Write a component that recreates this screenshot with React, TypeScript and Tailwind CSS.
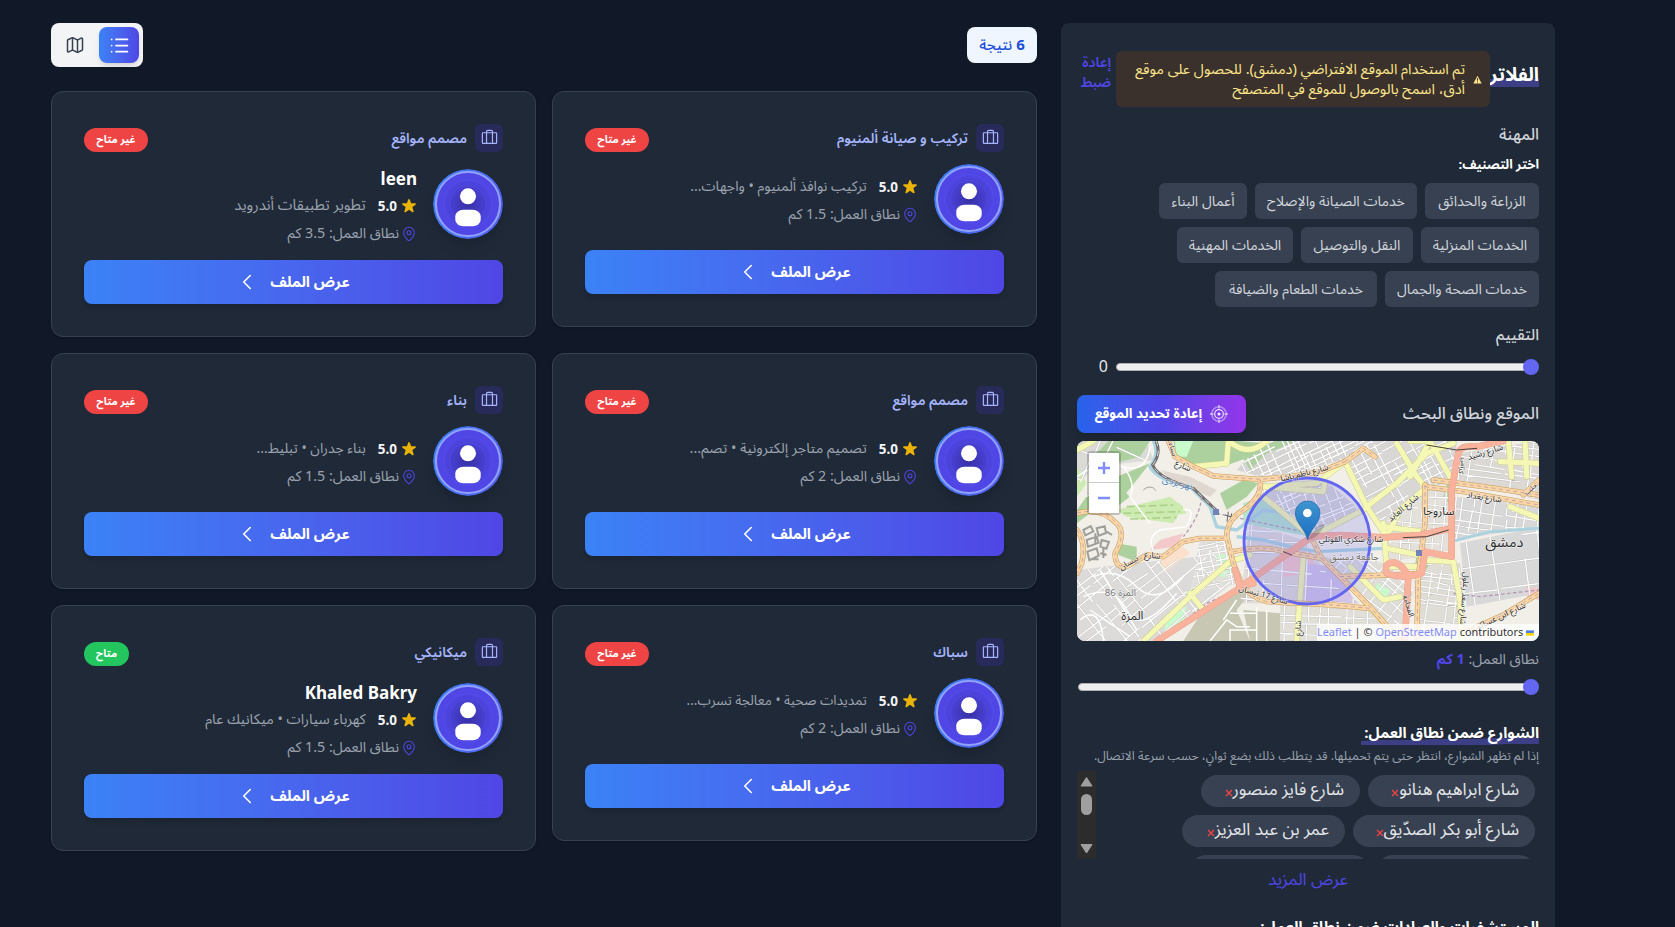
import React from "react";
import { PiSuitcase } from "react-icons/pi";
import { Map, MapPin, List, ChevronLeft } from "lucide-react";

type Pt = [number, number];

function seeded(seed: number) {
  let s = seed;
  return () => {
    s = (s * 16807) % 2147483647;
    return s / 2147483647;
  };
}

function streetPath(cx: number, cy: number, r: number, angle: number, gap: number, seed: number) {
  const rnd = seeded(seed);
  const a = (angle * Math.PI) / 180;
  const out: string[] = [];
  const pt = (u: number, v: number) =>
    `${(cx + u * Math.cos(a) - v * Math.sin(a)).toFixed(0)} ${(cy + u * Math.sin(a) + v * Math.cos(a)).toFixed(0)}`;
  for (let dir = 0; dir < 2; dir++) {
    for (let v = -r; v < r; v += gap * (0.6 + rnd() * 0.9) * (dir ? 1.3 : 1)) {
      let u = -r;
      while (u < r) {
        const len = gap * (2 + rnd() * 7);
        const w = (rnd() - 0.5) * gap * 0.5;
        if (rnd() > 0.2) {
          out.push(dir ? `M${pt(v, u)}L${pt(v + w, u + len)}` : `M${pt(u, v)}L${pt(u + len, v + w)}`);
        }
        u += len + gap * rnd() * 0.6;
      }
    }
  }
  return out.join("");
}

const districts: { poly: string; c: Pt; r: number; angle: number; gap: number; fill: string }[] = [
  { poly: "640,393 930,393 880,450 720,490 630,500 560,480", c: [750, 450], r: 190, angle: -25, gap: 17, fill: "#d6d5d4" },
  { poly: "900,393 1220,393 1210,520 1120,530 1000,640 930,560 890,470", c: [1060, 500], r: 240, angle: -28, gap: 18, fill: "#d8d7d6" },
  { poly: "1225,430 1467,393 1467,570 1215,510", c: [1340, 480], r: 180, angle: 8, gap: 20, fill: "#dcd9d5" },
  { poly: "1000,640 1120,530 1205,530 1200,720 1010,760", c: [1100, 640], r: 170, angle: 4, gap: 19, fill: "#e4e0da" },
  { poly: "1215,560 1467,590 1467,650 1215,690", c: [1340, 610], r: 150, angle: 8, gap: 24, fill: "#d9d8d8" },
  { poly: "1230,700 1467,650 1467,850 1250,890", c: [1340, 780], r: 150, angle: -8, gap: 52, fill: "#d9d8d8" },
  { poly: "81,780 250,760 440,740 540,690 570,800 330,993 81,993", c: [290, 870], r: 300, angle: -38, gap: 30, fill: "#dcdbda" },
  { poly: "450,690 540,690 570,820 420,850", c: [500, 770], r: 120, angle: -12, gap: 16, fill: "#e2e0dc" },
  { poly: "640,530 830,515 930,600 800,660 640,560", c: [770, 580], r: 190, angle: -22, gap: 21, fill: "#d6d5d5" },
  { poly: "600,640 760,690 860,830 930,880 570,880", c: [740, 770], r: 190, angle: 3, gap: 42, fill: "#e0dad8" },
  { poly: "810,740 1010,760 1090,840 1060,993 960,900", c: [980, 850], r: 170, angle: 38, gap: 26, fill: "#dfddd8" },
  { poly: "1090,760 1230,760 1250,960 1100,993", c: [1160, 860], r: 140, angle: 8, gap: 17, fill: "#e0ddd6" },
  { poly: "690,885 960,885 1050,993 690,993", c: [850, 940], r: 170, angle: 2, gap: 24, fill: "#e2dfd9" },
  { poly: "81,393 290,393 310,450 130,470 81,530", c: [190, 440], r: 120, angle: 25, gap: 38, fill: "#dadbd6" },
];

const parks = [
  "175,393 300,393 270,440 190,460 130,440",
  "370,393 570,393 640,400 600,440 520,470 430,470 380,440",
  "560,410 680,393 740,393 650,430 600,480",
  "130,530 200,520 240,560 200,590 120,610 81,640 81,600",
  "510,550 580,510 625,520 590,560 530,600",
  "90,610 220,560 300,460 200,500 180,560",
  "200,700 260,710 260,755 205,735",
  "1195,510 1215,530 1205,590 1180,560",
  "1100,730 1140,760 1120,790 1095,770",
];

const orangeRoads = [
  "M355 393 L375 440 L430 470 L490 498 L630 508 L720 500 L810 485 L885 455",
  "M630 508 Q640 560 580 600 Q530 630 530 680 L550 760 L570 810",
  "M81 610 Q150 590 200 640 Q230 670 195 730 Q195 775 230 770 L290 735 L340 740 L400 695 L450 685 L530 685",
  "M81 660 Q110 700 95 760 L81 790",
  "M550 725 Q640 705 700 725 L815 745",
  "M815 745 L870 800 L960 890 L1050 993",
  "M785 685 L815 745",
  "M570 820 Q600 860 650 875 L850 885 L960 895",
  "M870 800 L1020 795 L1110 790",
  "M1125 525 L1125 640 L1105 800 L1100 993",
  "M885 455 L940 415 L975 440",
  "M1125 530 L1240 545 L1467 585",
  "M1150 510 L1300 530 L1467 555",
  "M1420 555 L1467 510",
  "M1260 960 L1360 915 L1467 850",
];
const yellowRoads = [
  "M81 420 L130 393",
  "M280 993 L430 850 L540 755 L600 735",
  "M420 850 L460 900",
  "M430 470 L530 460 L535 393",
  "M545 400 Q600 440 650 393",
  "M885 455 L800 520 L640 530",
  "M885 455 L950 590 L1010 680",
  "M950 590 L1040 520 L1130 430 L1210 400",
  "M1040 400 L1100 500 L1125 530",
  "M1080 393 L1140 393 L1200 500",
  "M1140 393 L1080 500",
  "M1010 680 L1050 600 L1120 540",
  "M1000 640 L1010 770 L1110 770",
  "M1010 715 L1105 735",
  "M1110 750 L1210 755 L1230 870 L1235 993",
  "M760 740 L740 993",
  "M640 560 L785 680 L940 600",
  "M640 530 L820 545 L825 515",
  "M1375 393 L1385 500",
  "M1425 393 L1430 500",
  "M1350 455 L1467 460",
  "M900 770 L1000 870 L1050 860",
  "M940 870 L1050 993",
  "M1380 590 L1467 625",
  "M1000 650 L1110 665",
];
const redRoads = [
  "M320 993 L560 840 L700 740 L785 680",
  "M785 680 L870 675 L1000 682 L1110 675 L1205 655",
  "M1225 430 L1205 540 L1205 740 L1125 725 L1115 790 L1075 800 L1065 993",
  "M1075 800 Q1040 800 1010 790 Q1000 755 1035 758 Q1060 765 1075 800",
  "M1225 430 Q1230 405 1280 410 L1360 393",
  "M555 780 L570 830 L610 820",
];

const mapLabels: { t: string; x: number; y: number; r?: number; s?: number; c?: string }[] = [
  { t: "شارع ناظم باشا", x: 765, y: 497, r: -14, s: 25 },
  { t: "شارع شكري القوتلي", x: 903, y: 697, s: 25 },
  { t: "جامعة دمشق", x: 912, y: 750, s: 28, c: "#6b665e" },
  { t: "ساروجا", x: 1166, y: 616, s: 34 },
  { t: "دمشق", x: 1363, y: 710, s: 43 },
  { t: "المزة", x: 247, y: 931, s: 36 },
  { t: "المزة 86", x: 211, y: 857, s: 29, c: "#777777" },
  { t: "شارع بغداد", x: 1301, y: 570, r: 8, s: 25 },
  { t: "شارع رشيد", x: 1308, y: 434, r: -17, s: 26 },
  { t: "كرامي", x: 1232, y: 466, r: 105, s: 21 },
  { t: "شارع العابد", x: 1065, y: 600, r: -40, s: 26 },
  { t: "شارع 17 نيسان", x: 638, y: 862, r: 16, s: 25 },
  { t: "شارع", x: 306, y: 744, r: 5, s: 25 },
  { t: "نيسان", x: 240, y: 765, r: -30, s: 25 },
  { t: "شارع", x: 396, y: 475, r: 24, s: 25 },
  { t: "سناء", x: 362, y: 420, r: 75, s: 22 },
  { t: "نهر بردى", x: 380, y: 527, r: 14, s: 28, c: "#4d80b3" },
  { t: "شارع سعد زغلول", x: 1236, y: 865, r: 94, s: 24 },
  { t: "شارع ابن عساكر", x: 1356, y: 925, r: -25, s: 26 },
  { t: "الفحامة", x: 1068, y: 890, r: 72, s: 23 },
  { t: "شارع", x: 752, y: 955, r: -88, s: 24 },
  { t: "حلب", x: 1446, y: 542, r: -40, s: 22 },
];

function MapDrawing() {
  return (
    <svg viewBox="81 393 1386 600" className="block h-[200px] w-[462px]" preserveAspectRatio="none">
      <defs>
        {districts.map((d, i) => (
          <clipPath id={`district${i}`} key={i}>
            <polygon points={d.poly} />
          </clipPath>
        ))}
        <linearGradient id="pin" x1="0" x2="0" y1="0" y2="1">
          <stop offset="0" stopColor="#3f94d0" />
          <stop offset="1" stopColor="#1b6ec2" />
        </linearGradient>
      </defs>
      <rect x="81" y="393" width="1386" height="600" fill="#f2efe9" />
      {districts.map((d, i) => (
        <polygon key={i} points={d.poly} fill={d.fill} />
      ))}
      {parks.map((p) => (
        <polygon key={p} points={p} fill="#add19e" />
      ))}
      <path d="M81 470L110 520L81 560ZM250 590L390 580L410 610L260 630Z M200 600L360 560L400 590L370 640L230 620Z" fill="#cdebb0" />
      <path d="M230 590L370 585M220 610L390 605M240 627L380 622" stroke="#add18a" strokeWidth="5" strokeDasharray="24 9" />
      <path d="M580 580L640 560L780 680L580 640Z" fill="#b5e3cf" />
      <path d="M375 393H430L410 440L380 440ZM500 730L560 740V800L510 800ZM980 820L1020 840L1000 880L975 860ZM360 900L410 890L400 940L340 970Z" fill="#c8facc" />
      <path d="M690 700L780 720L800 790L700 800Z M330 690L400 670L380 710L300 720Z M1430 830L1467 835V870L1430 860Z" fill="#f3c9c9" />
      <path d="M330 740L400 710L420 730L340 790Z" fill="#fbe0cc" />
      <path d="M770 760L850 770L920 880L760 880Z" fill="#d3c3e6" />
      <path d="M460 900L560 840L600 850L560 900L600 993H400ZM580 900L690 910V993H600Z" fill="#c7c7b4" />
      <path d="M330 480L420 500L500 540L480 560L380 520Z" fill="#e0d8d0" />
      {districts.map((d, i) => {
        const path = streetPath(d.c[0], d.c[1], d.r, d.angle, d.gap, 31 + i * 97);
        return (
          <g key={i} clipPath={`url(#district${i})`} fill="none">
            <path d={path} stroke="#bdbbb8" strokeWidth="6" />
            <path d={path} stroke="#ffffff" strokeWidth="4.2" />
          </g>
        );
      })}
      <g fill="none" stroke="#ffffff" strokeWidth="4.5">
        <path d="M81 500Q150 450 220 470T300 410M220 470Q260 520 240 560L300 640M110 560Q170 520 180 470M400 600Q440 590 410 650L330 660Q290 680 310 720M540 910H620V960H540V993M480 993L530 930L560 950H600M560 870L520 930M620 890V993M650 900V993" />
        <path d="M130 800Q200 770 260 830T400 800M100 860Q190 820 230 900T380 850M150 780L260 960M120 900L240 980M90 930Q150 880 160 993" />
      </g>
      <g fill="none" stroke="#9e9e9b" strokeWidth="5">
        <path d="M100 660l22-12 8 16-24 12ZM140 655l24 -6 4 20-22 8ZM110 690l30-10 6 18-32 12ZM155 690l22 6-8 20-18-6ZM112 725l28-10 6 22-28 14ZM150 730l20 4M170 665l16 10M120 748l26 0M136 670v30M160 710v34" strokeWidth="6" />
        <path d="M280 540q15-14 30-6l8 8" strokeWidth="3" />
      </g>
      <g fill="none" stroke="#aad3df">
        <path d="M310 393Q330 430 300 470Q320 510 420 530L480 590L500 650L560 660L640 600L720 610M560 680L640 690L720 710L800 725L1000 715" strokeWidth="10" />
        <path d="M1215 692L1320 665L1467 655" strokeWidth="9" />
      </g>
      <g fill="none">
        <path d="M318 393Q335 430 308 465Q325 505 430 535L498 600" stroke="#707070" strokeWidth="9" />
        <path d="M318 393Q335 430 308 465Q325 505 430 535L498 600" stroke="#dddddd" strokeWidth="3" strokeDasharray="16 14" />
        <path d="M455 560Q450 620 400 680M500 610L640 640L785 670M330 993L470 880L560 840M1210 850L1290 860L1467 840" stroke="#b39bb5" strokeWidth="4" strokeDasharray="11 7" />
        <path d="M535 605l-4 30M545 610l-4 26M525 615l30 10" stroke="#666666" strokeWidth="3" />
      </g>
      <g fill="none" strokeLinecap="round" strokeLinejoin="round">
        {yellowRoads.map((d) => (
          <path key={d} d={d} stroke="#c9cc92" strokeWidth="18.5" />
        ))}
        {yellowRoads.map((d) => (
          <path key={d} d={d} stroke="#f5f8b4" strokeWidth="15.5" />
        ))}
        {orangeRoads.map((d) => (
          <path key={d} d={d} stroke="#c29a5c" strokeWidth="16" />
        ))}
        {orangeRoads.map((d) => (
          <path key={d} d={d} stroke="#fcd6a4" strokeWidth="13" />
        ))}
        {orangeRoads.map((d) => (
          <path key={d} d={d} stroke="#b59ca8" strokeWidth="2.5" strokeDasharray="12 10" strokeLinecap="butt" />
        ))}
        {redRoads.map((d) => (
          <path key={d} d={d} stroke="#e5a08e" strokeWidth="20" />
        ))}
        {redRoads.map((d) => (
          <path key={d} d={d} stroke="#f9b29c" strokeWidth="17.5" />
        ))}
        <path d="M1060 683L1130 680L1195 660M1130 405L1220 420L1280 415M700 725L725 735" stroke="#4a4040" strokeWidth="3" />
      </g>
      <g fill="#7382b5">
        <rect x="489" y="597" width="18" height="18" />
        <rect x="1098" y="720" width="18" height="18" />
      </g>
      <circle cx="771" cy="693" r="189" fill="#6366f1" fillOpacity="0.2" stroke="#6366f1" strokeWidth="8.5" />
      <g textAnchor="middle" fontFamily="'Noto Sans Arabic', 'Noto Sans', 'DejaVu Sans', sans-serif" paintOrder="stroke" stroke="#ffffff" strokeOpacity="0.55" strokeWidth="4">
        {mapLabels.map((l, i) => (
          <text key={i} fontSize={l.s} fill={l.c ?? "#2b2b2b"} transform={`translate(${l.x} ${l.y}) rotate(${l.r ?? 0})`}>
            {l.t}
          </text>
        ))}
      </g>
      <path d="M773 690L800 650Q840 630 815 660Q800 685 773 690Z" fill="#000000" opacity="0.18" />
      <path d="M773 690C768 660 736 640 736 609A37 36 0 0 1 810 609C810 640 778 660 773 690Z" fill="url(#pin)" stroke="#2a6fae" strokeWidth="2.5" />
      <circle cx="772" cy="609" r="13" fill="#ffffff" />
    </svg>
  );
}

function Slider({ className }: { className: string }) {
  return (
    <div className={`flex h-4 items-center ${className}`} dir="rtl">
      <div className="-me-2 z-10 size-4 shrink-0 rounded-full bg-[#6366f1]" />
      <div className="h-2 grow rounded-full border border-[#b2b2b2] bg-[#efefef]" />
    </div>
  );
}

function Chip({ w, children }: { w: string; children: React.ReactNode }) {
  return (
    <div className={`flex h-9 items-center justify-center whitespace-nowrap rounded-md bg-[#374151] pt-0.5 text-[14.2px] text-[#d1d5db] ${w}`}>
      {children}
    </div>
  );
}

function Pill({ w, children }: { w: string; children: React.ReactNode }) {
  return (
    <div className={`flex h-8 shrink-0 items-center whitespace-nowrap rounded-full bg-[#374151] ps-4 text-[17px] text-[#e5e7eb] ${w}`}>
      <span>{children}</span>
      <svg viewBox="0 0 8 8" className="mt-1 size-2 shrink-0" stroke="#ef4444" strokeWidth="1.4">
        <path d="M1 1L7 7M7 1L1 7" />
      </svg>
    </div>
  );
}

function TargetIcon() {
  return (
    <svg viewBox="0 0 18 18" className="size-[18px]" fill="none" stroke="#ffffff">
      <circle cx="9" cy="9" r="7.2" strokeWidth="1.6" strokeOpacity="0.4" />
      <circle cx="9" cy="9" r="4.3" strokeWidth="1.2" strokeOpacity="0.85" />
      <circle cx="9" cy="9" r="1.5" fill="#ffffff" stroke="none" />
      <path d="M9 0V3.6M9 14.4V18M0 9H3.6M14.4 9H18" strokeWidth="1.5" strokeOpacity="0.6" />
    </svg>
  );
}

function Sidebar() {
  return (
    <aside className="h-[904px] w-[494px] shrink-0 overflow-hidden rounded-t-lg bg-[#1f2937] px-4 pt-7">
      <div className="flex h-14 items-center">
        <h2 className="flex h-7 w-[49px] items-center whitespace-nowrap bg-[linear-gradient(to_bottom,transparent_50%,#3d3f86_50%,#3d3f86_78%,transparent_78%)] pb-2 text-[19px] font-bold leading-5 text-white">الفلاتر</h2>
        <div className="flex h-14 w-[374px] items-center rounded-md bg-[#3a302c] ps-2 pe-3 text-[#fde68a]">
          <svg viewBox="0 0 10 10" className="me-2 size-[9px] shrink-0">
            <path d="M5 0.8L9.6 9.4H0.4Z" fill="#fde68a" />
            <path d="M5 3.5V6.3M5 7.2V8.4" stroke="#3a302c" strokeWidth="1.1" />
          </svg>
          <div className="whitespace-nowrap pt-0.5 text-[14.5px] leading-5">
            <div>تم استخدام الموقع الافتراضي (دمشق). للحصول على موقع</div>
            <div>أدق، اسمح بالوصول للموقع في المتصفح</div>
          </div>
        </div>
        <div className="ms-[5px] -mt-3 text-[14px] font-semibold leading-5 text-[#4f46e5]">
          <div>إعادة</div>
          <div>ضبط</div>
        </div>
      </div>

      <div className="mt-4 h-6 text-[16px] font-medium leading-6 text-[#d1d5db]">المهنة</div>
      <div className="mt-2 h-5 text-[13px] font-bold leading-[21px] text-white">اختر التصنيف:</div>
      <div className="mt-2 flex flex-wrap gap-2">
        <Chip w="w-[114px]">الزراعة والحدائق</Chip>
        <Chip w="w-[162px]">خدمات الصيانة والإصلاح</Chip>
        <Chip w="w-[88px]">أعمال البناء</Chip>
        <div className="h-0 w-[60px]" />
        <Chip w="w-[118px]">الخدمات المنزلية</Chip>
        <Chip w="w-[112px]">النقل والتوصيل</Chip>
        <Chip w="w-[116px]">الخدمات المهنية</Chip>
        <div className="h-0 w-[80px]" />
        <Chip w="w-[154px]">خدمات الصحة والجمال</Chip>
        <Chip w="w-[162px]">خدمات الطعام والضيافة</Chip>
      </div>

      <div className="mt-4 h-6 text-[15.5px] font-medium leading-6 text-[#d1d5db]">التقييم</div>
      <div className="mt-2 flex h-6 items-center">
        <Slider className="w-[423px]" />
        <span className="ms-2 w-4 text-[16px] text-[#e5e7eb]">0</span>
      </div>

      <div className="mt-4 flex h-[38px] items-center justify-between">
        <span className="text-[16.4px] font-medium text-[#d1d5db]">الموقع ونطاق البحث</span>
        <div className="flex h-[38px] w-[169px] items-center justify-center gap-2 whitespace-nowrap rounded-lg bg-linear-to-r from-[#2563eb] via-[#4f46e5] to-[#9333ea] text-[13.5px] font-bold text-white shadow-lg">
          <TargetIcon />
          إعادة تحديد الموقع
        </div>
      </div>

      <div className="relative mt-2 h-[200px] overflow-hidden rounded-lg">
        <MapDrawing />
        <div className="absolute left-[10px] top-[10px] flex h-16 w-[34px] flex-col rounded border-2 border-black/20 bg-clip-padding">
          <div className="flex h-[30px] items-center justify-center border-b border-[#cccccc] bg-white">
            <svg viewBox="0 0 14 14" className="size-3.5" stroke="#818cf8" strokeWidth="2.4">
              <path d="M1 7H13M7 1V13" />
            </svg>
          </div>
          <div className="flex h-[30px] items-center justify-center bg-white">
            <svg viewBox="0 0 14 14" className="size-3.5" stroke="#818cf8" strokeWidth="2.4">
              <path d="M1 7H13" />
            </svg>
          </div>
        </div>
        <div dir="ltr" className="absolute bottom-0 right-0 flex h-[17px] w-[222px] items-center justify-end gap-[3px] whitespace-nowrap bg-white/80 pe-[5px] font-['Noto_Sans'] text-[10.9px] text-[#333333]">
          <span className="text-[#818cf8]">Leaflet</span>
          <span>| ©</span>
          <span className="text-[#818cf8]">OpenStreetMap</span>
          <span>contributors</span>
          <svg viewBox="0 0 12 8" className="h-2 w-3">
            <rect width="12" height="4" fill="#4c7be1" />
            <rect y="4" width="12" height="4" fill="#ffd500" />
          </svg>
        </div>
      </div>

      <div className="mt-2 h-5 text-[14.4px] leading-[21px] text-[#9ca3af]">
        نطاق العمل: <span className="font-bold text-[#4f46e5]">1 كم</span>
      </div>
      <div className="mt-[10px] flex h-4 items-center">
        <Slider className="w-[461px]" />
      </div>

      <h3 className="mt-[26px] flex h-6 w-[178px] items-center whitespace-nowrap bg-[linear-gradient(179deg,transparent_72%,#3d3f86_73%,#3d3f86_95%,transparent_96%)] text-[15px] font-bold leading-5 text-white">الشوارع ضمن نطاق العمل:</h3>
      <div className="mt-px h-5 whitespace-nowrap text-[12.3px] leading-5 text-[#9ca3af]">إذا لم تظهر الشوارع، انتظر حتى يتم تحميلها. قد يتطلب ذلك بضع ثوانٍ، حسب سرعة الاتصال.</div>

      <div className="mt-[5px] flex h-[88px] justify-between overflow-hidden">
        <div className="flex flex-col gap-2 ps-1 pt-1">
          <div className="flex gap-2">
            <Pill w="w-[167px]">شارع ابراهيم هنانو</Pill>
            <Pill w="w-[159px]">شارع فايز منصور</Pill>
          </div>
          <div className="flex gap-2">
            <Pill w="w-[182px]">شارع أبو بكر الصدّيق</Pill>
            <Pill w="w-[163px]">عمر بن عبد العزيز</Pill>
          </div>
          <div className="flex gap-2">
            <div className="h-8 w-[158px] rounded-full bg-[#374151]" />
            <div className="h-8 w-[179px] rounded-full bg-[#374151]" />
          </div>
        </div>
        <svg viewBox="0 0 19 88" className="h-[88px] w-[19px]">
          <rect width="19" height="88" fill="#2c2c2c" />
          <path d="M9.5 6.5L15 15H4Z M9.5 82L15 73.5H4Z" fill="#9f9f9f" stroke="#9f9f9f" strokeLinejoin="round" />
          <rect x="4" y="23" width="11" height="21" rx="5.5" fill="#9f9f9f" />
        </svg>
      </div>
      <div className="mt-[7px] flex h-7 items-center justify-center text-[17px] leading-7 text-[#4f46e5]">عرض المزيد</div>
      <h3 className="mt-[21px] h-6 w-[280px] whitespace-nowrap text-[15px] font-bold leading-6 text-white">المستشفيات والعيادات ضمن نطاق العمل:</h3>
    </aside>
  );
}

function Avatar() {
  return (
    <svg viewBox="0 0 70 70" className="size-[70px] shrink-0 rounded-full shadow-lg">
      <defs>
        <linearGradient id="ring" x1="0" x2="1" y1="0" y2="0.3">
          <stop offset="0" stopColor="#3b82f6" />
          <stop offset="1" stopColor="#4f5ff0" />
        </linearGradient>
        <radialGradient id="disc">
          <stop offset="0" stopColor="#3730a3" />
          <stop offset="0.75" stopColor="#4f46e5" />
        </radialGradient>
      </defs>
      <circle cx="35" cy="35" r="35" fill="url(#ring)" />
      <circle cx="35" cy="35" r="32" fill="url(#disc)" stroke="#a5b4fc" strokeOpacity="0.8" strokeWidth="2" />
      <g fill="none" stroke="#6366f1" strokeOpacity="0.35" strokeWidth="0.7">
        <circle cx="35" cy="35" r="24.5" />
        <circle cx="35" cy="35" r="18.5" />
      </g>
      <circle cx="35" cy="27.3" r="8" fill="#ffffff" />
      <rect x="22.3" y="40.8" width="25.4" height="16.4" rx="8" ry="6.5" fill="#ffffff" />
    </svg>
  );
}

type Worker = { job: string; name?: string; skills: string; size: string; km: string; free?: boolean };

const workers: Worker[] = [
  { job: "تركيب و صيانة ألمنيوم", skills: "تركيب نوافذ ألمنيوم • واجهات...", size: "text-[14.1px]", km: "1.5" },
  { job: "مصمم مواقع", name: "leen", skills: "تطوير تطبيقات أندرويد", size: "text-[14.8px]", km: "3.5" },
  { job: "مصمم مواقع", skills: "تصميم متاجر إلكترونية • تصم...", size: "text-[14.4px]", km: "2" },
  { job: "بناء", skills: "بناء جدران • تبليط...", size: "text-[14px]", km: "1.5" },
  { job: "سباك", skills: "تمديدات صحية • معالجة تسرب...", size: "text-[13.5px]", km: "2" },
  { job: "ميكانيكي", name: "Khaled Bakry", skills: "كهرباء سيارات • ميكانيك عام", size: "text-[14.3px]", km: "1.5", free: true },
];

function Card({ w }: { w: Worker }) {
  return (
    <article className="flex w-[485px] flex-col rounded-xl border border-[#374151] bg-[#1f2937] p-8 shadow-sm">
      <div className="flex h-7 items-center gap-2">
        <div className="flex size-7 items-center justify-center rounded-md bg-[#282a5a] text-[#a5b4fc]">
          <PiSuitcase size={19} className="-mt-0.5" />
        </div>
        <span className="text-[14px] font-semibold text-[#a5b4fc]">{w.job}</span>
        <span className={`ms-auto mt-[3px] flex h-6 items-center justify-center whitespace-nowrap rounded-full text-[10.6px] font-bold text-white ${w.free ? "w-[45px] bg-[#22c55e]" : "w-16 bg-[#ef4444]"}`}>
          {w.free ? "متاح" : "غير متاح"}
        </span>
      </div>
      <div className={`mt-3 flex gap-4 ${w.name ? "h-20 items-center" : "h-[70px]"}`}>
        <Avatar />
        <div className={`flex flex-col self-start ${w.name ? "" : "pt-[9px]"}`}>
          {w.name && <div className="h-7 font-['Noto_Sans'] text-[17px] font-bold leading-[29px] text-white">{w.name}</div>}
          <div className="flex h-7 items-center whitespace-nowrap">
            <svg viewBox="0 0 20 20" className="size-4" fill="#eab308">
              <path d="M9.05 1.9c.3-.9 1.6-.9 1.9 0l1.7 4.6h5c1 0 1.4 1.2.6 1.8l-4 3.1 1.5 5.2c.3.9-.8 1.7-1.5 1.1L10 14.7l-4.2 3c-.8.6-1.8-.2-1.500-1.100l1.500-5.200-4-3.100c-.8-.6-.4-1.800.6-1.800h5z" />
            </svg>
            <span className="ms-1 font-['Noto_Sans'] text-[13.5px] font-bold text-[#f3f4f6]">5.0</span>
            <span className={`ms-3 leading-5 text-[#9ca3af] ${w.size}`}>{w.skills}</span>
          </div>
          <div className="flex h-7 items-center whitespace-nowrap text-[14.3px] leading-5 text-[#9ca3af]">
            <MapPin size={16} strokeWidth={1.6} className="text-[#4f46e5]" />
            <span className="ms-0.5">نطاق العمل: {w.km} كم</span>
          </div>
        </div>
      </div>
      <div className="mt-4 flex h-11 items-center justify-center rounded-lg bg-linear-to-r from-[#3b82f6] to-[#4f46e5] text-[15px] font-bold text-white shadow-md">
        عرض الملف
        <ChevronLeft size={26} strokeWidth={1.5} className="ms-[10px] -me-[3px]" />
      </div>
    </article>
  );
}

export default function App() {
  return (
    <div dir="rtl" className="flex h-[927px] w-[1675px] gap-6 overflow-hidden bg-[#111827] pr-[120px] pt-[23px] font-['Noto_Sans_Arabic','Noto_Sans','DejaVu_Sans',sans-serif]">
      <Sidebar />
      <main className="flex w-[986px] flex-col">
        <div className="flex h-11 items-center justify-between">
          <div className="flex h-9 w-[70px] items-center justify-center gap-1 whitespace-nowrap rounded-lg bg-[#eff6ff] text-[15px] font-medium text-[#1d4ed8]">
            <b>6</b> نتيجة
          </div>
          <div className="flex h-11 w-[92px] items-center gap-1 rounded-lg bg-[#f3f4f6] p-1">
            <div className="flex h-9 w-10 items-center justify-center rounded-lg bg-linear-to-r from-[#3b82f6] to-[#4f46e5] text-white shadow-md">
              <List size={21} strokeWidth={2} />
            </div>
            <div className="flex h-9 w-10 items-center justify-center text-[#374151]">
              <Map size={20} strokeWidth={1.8} />
            </div>
          </div>
        </div>
        <div className="mt-6 grid grid-cols-2 items-start gap-4">
          {workers.map((w, i) => (
            <Card key={i} w={w} />
          ))}
        </div>
      </main>
    </div>
  );
}
